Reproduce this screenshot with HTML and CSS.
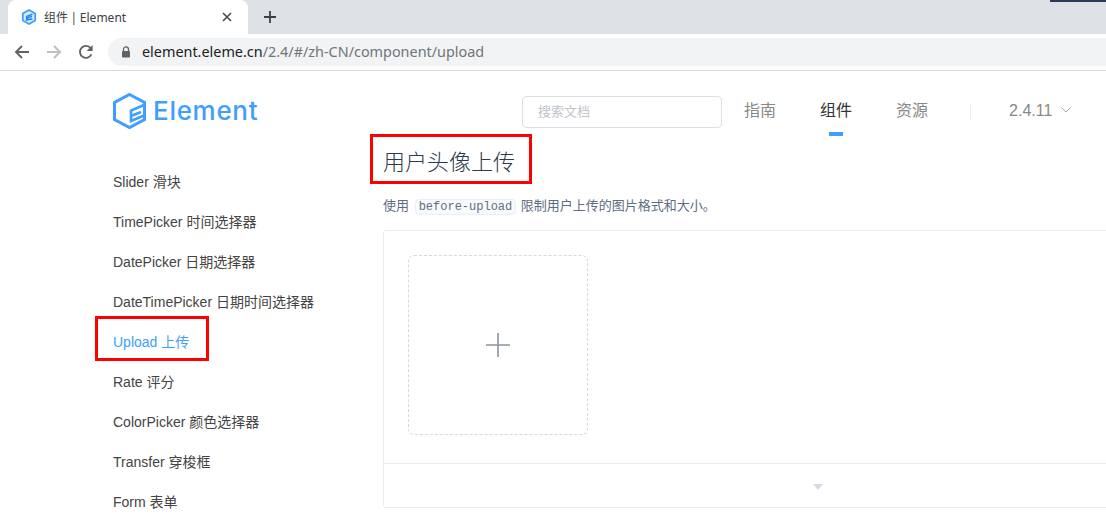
FILE: index.html
```html
<!DOCTYPE html>
<html lang="zh-CN">
  <head>
    <meta charset="UTF-8" />
    <title>组件 | Element</title>
    <link rel="stylesheet" href="styles.css">
  </head>

  <body>
    <!-- Browser chrome -->
    <div class="tabstrip">
      <div class="tab">
        <svg class="tab-icon" width="16" height="16" viewBox="0 0 16 16">
          <path d="M8 1 14.2 4.5V11.5L8 15 1.8 11.5V4.5Z" fill="#d5ebff" stroke="#409eff" stroke-width="1.8"/>
          <path d="M11.4 5.2 5.6 7.4V11L11.4 9.8M6 9 11 7.4" fill="none" stroke="#1d85ea" stroke-width="1.5"/>
        </svg>
        <span class="tab-title">组件 | Element</span>
        <svg class="tab-close" width="10" height="10" viewBox="0 0 10 10">
          <path d="M1 1 9 9M9 1 1 9" stroke="#45484d" stroke-width="1.6"/>
        </svg>
      </div>
      <svg class="tab-new" width="12" height="12" viewBox="0 0 12 12">
        <path d="M6 0V12M0 6H12" stroke="#3c4043" stroke-width="1.8"/>
      </svg>
      <div class="account-mark"></div>
    </div>
    <div class="toolbar">
      <svg class="tool" width="16" height="16" viewBox="0 0 16 16">
        <path d="M15 8H2M8 2 2 8 8 14" fill="none" stroke="#5f6368" stroke-width="1.9"/>
      </svg>
      <svg class="tool" width="16" height="16" viewBox="0 0 16 16">
        <path d="M1 8H14M8 2 14 8 8 14" fill="none" stroke="#bcbfc3" stroke-width="1.9"/>
      </svg>
      <svg class="tool" width="16" height="16" viewBox="0 0 16 16">
        <path d="M13.4 10.4A6 6 0 1 1 12.6 4" fill="none" stroke="#5f6368" stroke-width="1.9"/>
        <path d="M14.6 1V7H8.6Z" fill="#5f6368"/>
      </svg>
      <div class="omnibox">
        <svg width="10" height="12" viewBox="0 0 10 12">
          <path d="M2.5 5V3.4a2.5 2.5 0 0 1 5 0V5" fill="none" stroke="#5f6368" stroke-width="1.3"/>
          <rect x="1" y="5" width="8" height="6.5" rx="0.8" fill="#5f6368"/>
        </svg>
        <span class="url"><b>element.eleme.cn</b>/2.4/#/zh-CN/component/upload</span>
      </div>
    </div>

    <!-- Site header -->
    <header class="site-header">
      <a class="logo">
        <svg width="36" height="38" viewBox="0 0 36 38">
          <path d="M17.5 2.5 32.5 10.5V27.5L17.5 35.5 2.5 27.5V10.5Z" fill="none" stroke="#409eff" stroke-width="3"/>
          <path d="M32 13 19 18.5V29L32 23.5M19 24 29 20" fill="none" stroke="#409eff" stroke-width="2.6"/>
        </svg>
        <span class="logo-text">Element</span>
      </a>
      <input class="search" type="text" placeholder="搜索文档" />
      <nav class="main-nav">
        <a>指南</a>
        <a class="active">组件</a>
        <a>资源</a>
      </nav>
      <span class="nav-gap"></span>
      <span class="version">2.4.11</span>
      <svg class="version-arrow" width="10" height="6" viewBox="0 0 10 6">
        <path d="M0.5 0.5 5 5 9.5 0.5" fill="none" stroke="#a8abb2" stroke-width="1"/>
      </svg>
    </header>

    <div class="page">
      <!-- Side menu -->
      <ul class="side-nav">
        <li>Slider 滑块</li>
        <li>TimePicker 时间选择器</li>
        <li>DatePicker 日期选择器</li>
        <li>DateTimePicker 日期时间选择器</li>
        <li class="current">Upload 上传</li>
        <li>Rate 评分</li>
        <li>ColorPicker 颜色选择器</li>
        <li>Transfer 穿梭框</li>
        <li>Form 表单</li>
      </ul>

      <main class="content">
        <h3>用户头像上传</h3>
        <p>使用 <code>before-upload</code> 限制用户上传的图片格式和大小。</p>
        <div class="demo-block">
          <div class="demo-source">
            <div class="avatar-uploader">
              <svg width="24" height="24" viewBox="0 0 24 24">
                <path d="M12 0V24M0 12H24" stroke="#8c939d" stroke-width="1.6"/>
              </svg>
            </div>
          </div>
          <div class="demo-control"><span class="caret"></span></div>
        </div>
      </main>
    </div>

    <!-- Red annotation boxes -->
    <div class="mark mark-title"></div>
    <div class="mark mark-menu"></div>
  </body>
</html>
```

FILE: styles.css
```css
/* Base */
html,
body {
  height: 525px;
  overflow: hidden;
}

body {
  margin: 0;
  position: relative;
  background-color: #fff;
  font-family: "Liberation Sans", "Noto Sans CJK SC", sans-serif;
  color: #5e6d82;
}

/* Browser tabs */
.tabstrip {
  height: 34px;
  background-color: #dee1e6;
  display: flex;
  align-items: flex-end;
  padding-left: 8px;
  position: relative;
}

.tab {
  width: 240px;
  height: 34px;
  box-sizing: border-box;
  background-color: #fff;
  border-radius: 8px 8px 0 0;
  display: flex;
  align-items: center;
  padding: 0 16px 0 13px;
  gap: 7px;
}

.tab-title {
  flex: 1;
  font-size: 12px;
  color: #3c4043;
  font-family: "Noto Sans", "Noto Sans CJK SC", sans-serif;
  word-spacing: -0.5px;
}

.tab-new {
  margin: 0 0 11px 16px;
}

.account-mark {
  position: absolute;
  top: 0;
  right: 0;
  width: 56px;
  height: 2px;
  background-color: #2b3a55;
}

/* Browser toolbar */
.toolbar {
  height: 37px;
  box-sizing: border-box;
  display: flex;
  align-items: center;
  padding-left: 14px;
  border-bottom: 1px solid #dadce0;
  gap: 16px;
}

.omnibox {
  flex: 1;
  height: 28px;
  margin-left: -2px;
  background-color: #f1f3f4;
  border-radius: 14px 0 0 14px;
  display: flex;
  align-items: center;
  gap: 11px;
  padding-left: 13px;
}

.url {
  font-family: "Noto Sans", sans-serif;
  font-size: 14.4px;
  color: #70757a;
  margin-top: -1px;
}

.url b {
  font-weight: normal;
  color: #202124;
}

/* Site header */
.site-header {
  height: 80px;
  display: flex;
  align-items: center;
  padding-left: 112px;
}

.logo {
  display: flex;
  align-items: center;
  gap: 5px;
  width: 410px;
  margin-top: -1px;
}

.logo-text {
  font-family: "Inter", sans-serif;
  font-size: 26px;
  font-weight: 500;
  letter-spacing: 0.7px;
  color: #409eff;
}

.search {
  width: 200px;
  height: 32px;
  box-sizing: border-box;
  border: 1px solid #dcdfe6;
  border-radius: 4px;
  padding: 0 15px 3px;
  font-size: 13px;
  font-family: "Noto Sans CJK SC", sans-serif;
  margin-top: 2px;
}

.search::placeholder {
  color: #c0c4cc;
}

.main-nav {
  display: flex;
  gap: 44px;
  margin-left: 22px;
}

.main-nav a {
  height: 48px;
  line-height: 46px;
  font-size: 16px;
  color: #888;
  position: relative;
  margin-top: 2px;
}

.main-nav a.active {
  color: #333;
}

.main-nav a.active::after {
  content: "";
  position: absolute;
  left: 9px;
  bottom: 0;
  width: 14px;
  height: 4px;
  background-color: #409eff;
}

.nav-gap {
  width: 1px;
  height: 16px;
  background-color: #ebebeb;
  margin: 2px 0 0 42px;
}

.version {
  font-size: 16px;
  color: #888;
  margin-left: 38px;
}

.version-arrow {
  margin-left: 9px;
  margin-bottom: 3px;
}

/* Page body */
.page {
  display: flex;
  padding-left: 113px;
}

/* Side menu */
.side-nav {
  list-style: none;
  margin: 0;
  padding: 0;
  width: 270px;
  flex-shrink: 0;
  padding-top: 11px;
}

.side-nav li {
  height: 40px;
  line-height: 40px;
  font-size: 14px;
  color: #444;
  white-space: nowrap;
}

.side-nav li.current {
  color: #409eff;
}

/* Content */
.content {
  flex: 1;
  min-width: 0;
  overflow: hidden;
}

.content h3 {
  margin: -3px 0 0;
  font-size: 22px;
  line-height: 30px;
  font-weight: 300;
  color: #2c3a4a;
}

.content p {
  margin: 18px 0 13px;
  font-size: 13px;
  line-height: 20px;
  color: #5e6d82;
}

.content code {
  background-color: #f9fafc;
  border: 1px solid #eaeefb;
  border-radius: 4px;
  padding: 0 3px;
  margin: 0 1px 0 2px;
  font-family: "Liberation Mono", monospace;
  font-size: 12px;
}

.demo-block {
  width: 870px;
  height: 278px;
  box-sizing: border-box;
  border: 1px solid #ebebeb;
  border-radius: 3px;
}

.demo-source {
  height: 233px;
  box-sizing: border-box;
  padding: 24px;
  border-bottom: 1px solid #ebebeb;
}

.avatar-uploader {
  width: 180px;
  height: 180px;
  box-sizing: border-box;
  border: 1px dashed #d9d9d9;
  border-radius: 6px;
  display: flex;
  align-items: center;
  justify-content: center;
}

.demo-control {
  height: 43px;
  display: flex;
  justify-content: center;
  align-items: center;
}

.caret {
  width: 0;
  height: 0;
  border-left: 5px solid transparent;
  border-right: 5px solid transparent;
  border-top: 6px solid #d3dce6;
  margin-top: 2px;
}

/* Red annotation boxes */
.mark {
  position: absolute;
  box-sizing: border-box;
  border: 3px solid #f00;
}

.mark-title {
  left: 370px;
  top: 134px;
  width: 162px;
  height: 50px;
}

.mark-menu {
  left: 95px;
  top: 316px;
  width: 114px;
  height: 45px;
}
```
